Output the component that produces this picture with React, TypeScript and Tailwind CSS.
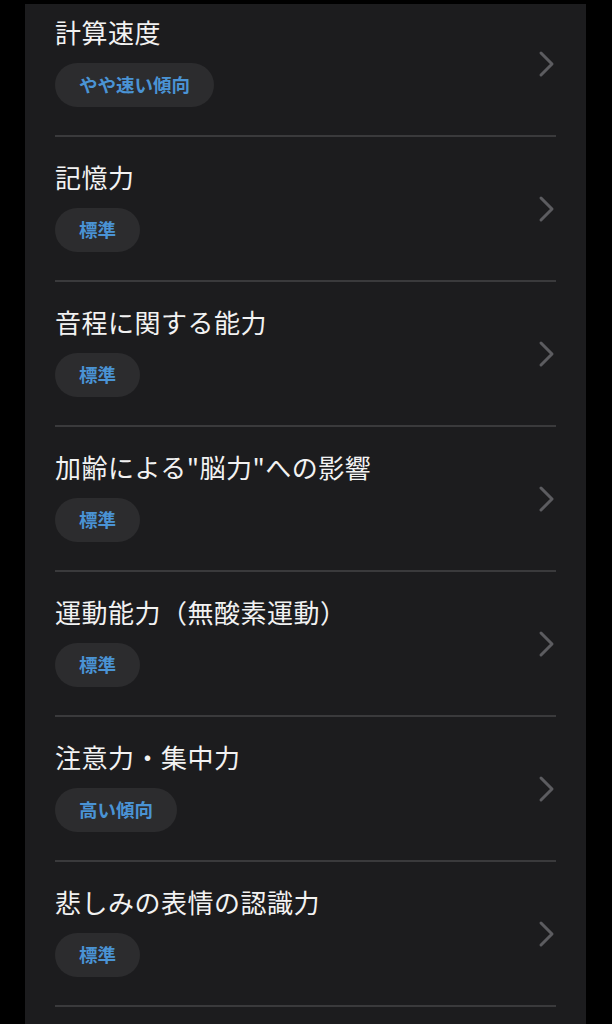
import React from "react";

type Item = { title: string; tag: string };

const items: Item[] = [
  { title: "計算速度", tag: "やや速い傾向" },
  { title: "記憶力", tag: "標準" },
  { title: "音程に関する能力", tag: "標準" },
  { title: "加齢による\"脳力\"への影響", tag: "標準" },
  { title: "運動能力（無酸素運動）", tag: "標準" },
  { title: "注意力・集中力", tag: "高い傾向" },
  { title: "悲しみの表情の認識力", tag: "標準" },
];

const Chevron = () => (
  <svg width="18" height="28" viewBox="0 0 18 28" fill="none">
    <path
      d="M3 3 L14 14 L3 25"
      stroke="#5c5c60"
      strokeWidth="3"
      strokeLinecap="round"
      strokeLinejoin="round"
    />
  </svg>
);

const Row: React.FC<{ item: Item }> = ({ item }) => (
  <div className="border-b-[2px] border-[#3a3a3c]">
    <div className="relative h-[143px] pt-[23px]">
      <div className="flex flex-col items-start">
        <div className="text-[26px] leading-[34px] text-[#f2f2f2] tracking-[0.5px]">
          {item.title}
        </div>
        <div className="mt-[14px] h-[44px] flex items-center rounded-full bg-[#2c2c2e] px-[24px] text-[18.5px] font-bold text-[#4a93d4]">
          {item.tag}
        </div>
      </div>
      <div className="absolute right-0 top-0 h-full flex items-center">
        <Chevron />
      </div>
    </div>
  </div>
);

export default function App() {
  return (
    <div
      className="bg-black h-[1024px] overflow-hidden pt-[4px]"
      style={{ fontFamily: '"Noto Sans CJK JP", "Noto Sans", sans-serif' }}
    >
      <div className="ml-[25px] w-[561px] h-[1020px] overflow-hidden bg-[#1c1c1e] px-[30px]">
        <div className="-mt-[12px]">
          {items.map((item, i) => (
            <Row key={i} item={item} />
          ))}
        </div>
      </div>
    </div>
  );
}
